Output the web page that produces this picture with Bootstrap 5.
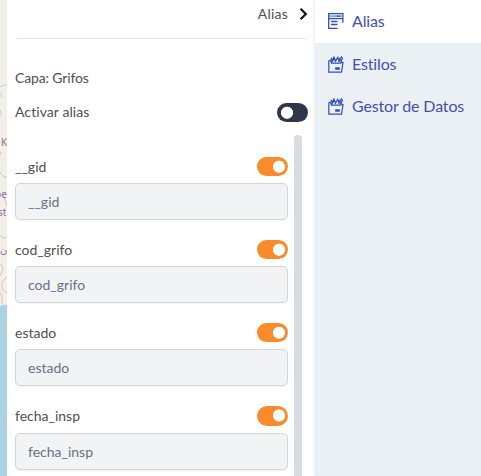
<!DOCTYPE html>
<html lang="es">
<head>
<meta charset="utf-8">
<meta name="viewport" content="width=device-width, initial-scale=1">
<title>Alias</title>
<link rel="stylesheet" href="https://cdn.jsdelivr.net/npm/bootstrap@5.3.0/dist/css/bootstrap.min.css">
<style>
body{font-family:Lato,"Noto Sans",sans-serif;font-size:14px;line-height:20px;color:#505050;letter-spacing:0}
.app{height:476px}
.map-strip{width:7px;background:#f2eee8}
.panel{width:307px;background:#fff}
.panel-head{height:40px;margin:0 8px 0 10px;border-bottom:1px solid #e2e4e7;padding:4px 0 0;letter-spacing:.2px}
.panel-head svg{margin-left:11px;margin-right:-2px;margin-top:3px}
.layer-name{padding:29px 8px 0;height:59px;letter-spacing:-.15px}
.all-row{padding:4px 6px 0 8px;height:37px;letter-spacing:.08px}
.switch{width:31px;height:19.5px;border:0;border-radius:10px!important;margin:0;background-color:#fb8a2b!important;background-image:radial-gradient(circle at 22px 9.7px,#fff 5.7px,transparent 6.4px)!important;float:none!important}
.switch.off{background-color:#2e3748!important;background-image:radial-gradient(circle at 10px 9.7px,#fff 5.7px,transparent 6.4px)!important}
.all-row{height:40px;padding-top:5px}
.all-row .switch{margin-top:1px}
.fields{width:281px;padding:21.400px 0 0 8px}
.field{height:83.200px}
.field-label{height:20px;margin-bottom:6.500px}
.field .form-control{height:37px;border:1px solid #d2d6dc;border-radius:5px;background:#f2f3f5;color:#687182;font-size:14px;padding:0 12px;letter-spacing:0;box-shadow:0 1px 2px #0000000d}
.track{width:8px;margin-left:6px;border-radius:4px 4px 0 0;background:#d6dde0}
.side{background:#ebf0f5;border-left:1px solid #f2f5f8;font-size:16px;color:#4650a8;letter-spacing:-.15px;box-shadow:0 0 3px #00000012}
.side-item{height:42px;padding-left:13px;gap:8px}
.side-item.current{height:43px;background:#fff;padding-bottom:1px}
.side-item svg{flex:none}
</style>
<script src="https://cdn.jsdelivr.net/npm/bootstrap@5.3.0/dist/js/bootstrap.bundle.min.js"></script>
</head>
<body class="overflow-hidden">
<svg width="0" height="0" class="position-absolute"><defs>
<symbol id="tray" viewBox="0 0 16 17"><path d="M.8 4.500v11.600h12.700l1.500-9.600h-2M.8 4.500h1.700l1 2.700h9.300l1.500-1.700M2.500 4.500l1.200-2 1 3M5 3.500 6 1l1.500 4M8 4l1.800-2.700L11 5M11 3.500l2.500-2.500 1 1.500-2.100 3.500M3.500 6l2.700-3M7 6l2.500-4M10.500 6l2.300-3" fill="none" stroke="#3150b5" stroke-width="1.200"/><rect x="7" y="11.200" width="5" height="2.600" rx="1" fill="#3150b5"/></symbol>
</defs></svg>
<div class="app d-flex overflow-hidden">
  <div class="map-strip flex-shrink-0">
    <svg class="d-block" width="7" height="476" viewBox="0 0 7 476">
      <path d="M0 306q4-2 7-1v171H0z" fill="#abd2e0"/>
      <g fill="none" stroke="#cdbdd0" stroke-width=".9"><path d="M0 87q3-2 7-2M0 92q3 2 1 5M0 110q3 3 0 6M0 152q1-1 1 3M0 172q3 6 7 5M4 198q2 4 3 9M0 235q3 5 7 2M0 264q4 2 2 8l-2 4M7 277q-8 5-4 13l4 3M0 292q3 4 2 12"/></g>
      <g font-family="Noto Sans, sans-serif" font-size="10" fill="#8d6b96"><text x="1" y="146">K</text><text x="-5" y="198">pe</text><text x="-2" y="216">st</text><text x="0" y="253" font-family="DejaVu Sans">ن</text></g>
    </svg>
  </div>
  <main class="panel flex-shrink-0 d-flex flex-column">
    <header class="panel-head d-flex justify-content-end align-items-start"><span>Alias</span><svg width="9" height="14" viewBox="0 0 9 14"><path d="M1.600 1.800 6.800 7l-5.200 5.200" fill="none" stroke="#111" stroke-width="2.200"/></svg></header>
    <div class="layer-name">Capa: Grifos</div>
    <div class="all-row d-flex justify-content-between"><label for="all">Activar alias</label><input id="all" class="form-check-input switch off" type="checkbox" role="switch"></div>
    <div class="d-flex flex-grow-1 overflow-hidden">
      <div class="fields">
        <div class="field"><div class="field-label d-flex justify-content-between"><span>__gid</span><input class="form-check-input switch" type="checkbox" role="switch" checked></div><input class="form-control" value="__gid" disabled></div>
        <div class="field"><div class="field-label d-flex justify-content-between"><span>cod_grifo</span><input class="form-check-input switch" type="checkbox" role="switch" checked></div><input class="form-control" value="cod_grifo" disabled></div>
        <div class="field"><div class="field-label d-flex justify-content-between"><span>estado</span><input class="form-check-input switch" type="checkbox" role="switch" checked></div><input class="form-control" value="estado" disabled></div>
        <div class="field"><div class="field-label d-flex justify-content-between"><span>fecha_insp</span><input class="form-check-input switch" type="checkbox" role="switch" checked></div><input class="form-control" value="fecha_insp" disabled></div>
      </div>
      <div class="track"></div>
    </div>
  </main>
  <nav class="side flex-grow-1">
    <div class="side-item current d-flex align-items-center"><svg width="16" height="16" viewBox="0 0 16 16"><path d="M9.500 15.300H.700V.700h14.200v9M.8 5.600h14" fill="none" stroke="#3150b5" stroke-width="1.300"/><path d="M1 3.200h13.500" stroke="#8fa0d8" stroke-width="2"/><path d="M9 3.200h3" stroke="#3150b5" stroke-width="1.200"/><path d="M3 8.500h6.500M3 11.500h6.500" stroke="#3150b5" stroke-width="1.500"/></svg><span>Alias</span></div>
    <div class="side-item d-flex align-items-center"><svg width="16" height="17"><use href="#tray"/></svg><span>Estilos</span></div>
    <div class="side-item d-flex align-items-center"><svg width="16" height="17"><use href="#tray"/></svg><span>Gestor de Datos</span></div>
  </nav>
</div>
</body>
</html>
